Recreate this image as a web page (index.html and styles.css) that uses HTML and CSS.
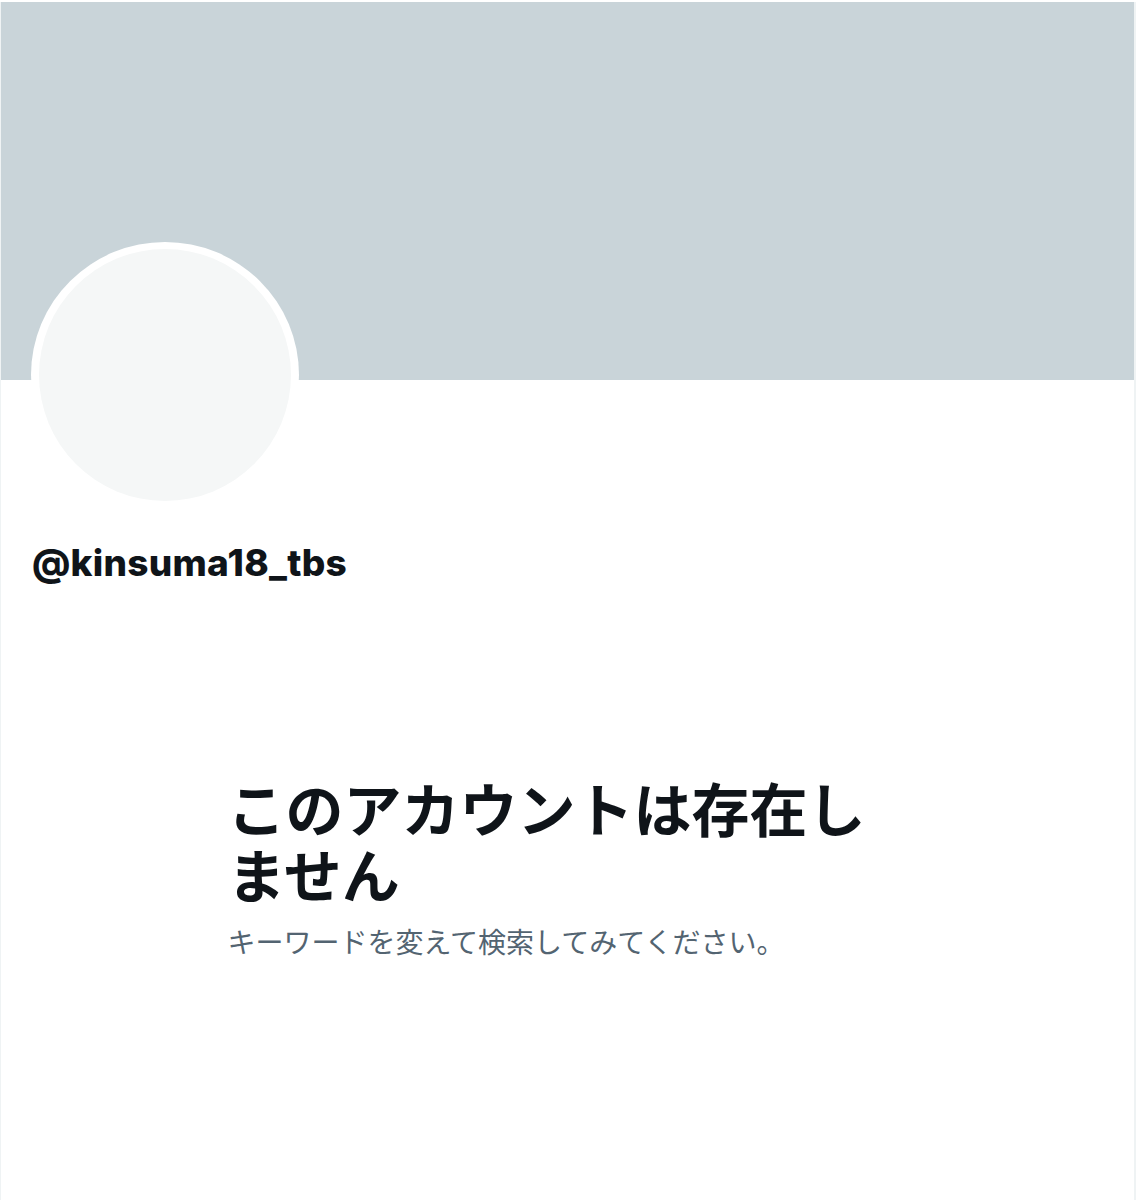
FILE: index.html
```html
<!DOCTYPE html>
<html lang="ja">
<head>
  <meta charset="UTF-8" />
  <meta name="viewport" content="width=device-width, initial-scale=1" />
  <title>@kinsuma18_tbs</title>
  <link rel="stylesheet" href="styles.css">
</head>
<body>
  <main class="column">
    <div class="banner"></div>

    <section class="profile">
      <div class="avatar">
        <div class="avatar-inner"></div>
      </div>
      <h2 class="handle">@kinsuma18_tbs</h2>
    </section>

    <section class="empty-state">
      <h1>このアカウントは存在しません</h1>
      <p>キーワードを変えて検索してみてください。</p>
    </section>
  </main>
</body>
</html>
```

FILE: styles.css
```css
html, body {
  margin: 0;
  padding: 0;
  background: #fff;
  font-family: Inter, "Liberation Sans", "Noto Sans CJK JP", sans-serif;
  color: #0f1419;
}

.column {
  width: 1133px;
  min-height: 1198px;
  margin-top: 2px;
  border-left: 1px solid #eff3f4;
  border-right: 2px solid #eff3f4;
}

.banner {
  height: 378px;
  background: #c9d4d9;
}

.profile {
  padding-left: 30px;
}

.avatar {
  width: 268px;
  height: 266px;
  margin-top: -138px;
  border-radius: 50%;
  background: #fff;
  padding: 7px 8px;
  box-sizing: border-box;
}

.avatar-inner {
  width: 100%;
  height: 100%;
  border-radius: 50%;
  background: #f5f7f7;
}

.handle {
  margin: 33px 0 0 1px;
  font-size: 37px;
  line-height: 44px;
  font-weight: 800;
  letter-spacing: 0.25px;
}

.empty-state {
  width: 680px;
  margin: 189px auto 0;
  font-family: "Noto Sans CJK JP", sans-serif;
}

.empty-state h1 {
  margin: 0;
  font-size: 58px;
  line-height: 66px;
  font-weight: 700;
}

.empty-state p {
  margin: 17px 0 0;
  font-size: 28px;
  line-height: 36px;
  color: #536471;
}
```
